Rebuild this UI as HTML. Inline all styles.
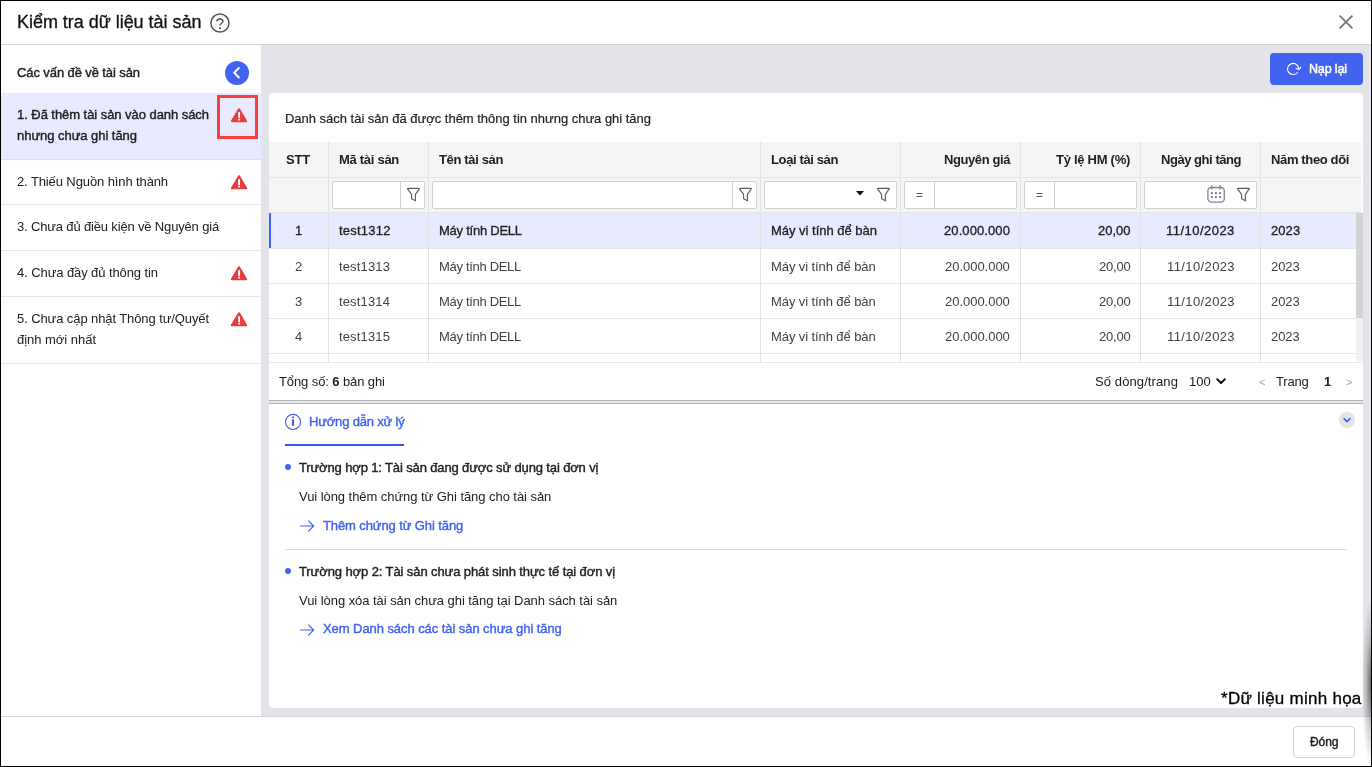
<!DOCTYPE html>
<html lang="vi">
<head>
<meta charset="utf-8">
<title>Kiểm tra dữ liệu tài sản</title>
<style>
*{box-sizing:border-box;margin:0;padding:0}
html,body{width:1372px;height:767px;overflow:hidden;background:#fff}
body{font-family:"Liberation Sans",sans-serif;font-size:13px;color:#212121;position:relative}
.a{position:absolute}
.t{position:absolute;white-space:pre;will-change:transform}
.t b{font-weight:bold}
#frame{position:absolute;left:0;top:0;width:1372px;height:767px;border:1px solid #000;z-index:50}
.vs{position:absolute;width:1px;background:#e3e3e3}
.hs{position:absolute;height:1px;background:#e5e5e5}
.inp{position:absolute;background:#fff;border:1px solid #d0d0d0;border-radius:2px;height:28px;top:181px}
svg{position:absolute;overflow:visible}
</style>
</head>
<body>
<!-- header -->
<div class="a" style="left:1px;top:1px;width:1370px;height:44px;background:#fff;border-bottom:1px solid #d4d4d4"></div>
<!-- main grey -->
<div class="a" style="left:261px;top:45px;width:1110px;height:672px;background:#e2e4e9"></div>
<!-- sidebar -->
<div class="a" style="left:1px;top:45px;width:260px;height:671px;background:#fff"></div>
<div class="a" style="left:1px;top:93px;width:260px;height:67px;background:#e8ebff;border-bottom:1px solid #e0e0e0"></div>
<div class="hs" style="left:1px;top:204px;width:260px"></div>
<div class="hs" style="left:1px;top:250px;width:260px"></div>
<div class="hs" style="left:1px;top:296px;width:260px"></div>
<div class="hs" style="left:1px;top:363px;width:260px"></div>
<!-- red highlight box -->
<div class="a" style="left:217px;top:95px;width:41px;height:44px;border:3px solid #fb3d3d"></div>
<!-- blue circle with chevron -->
<div class="a" style="left:225px;top:61px;width:24px;height:24px;border-radius:12px;background:#4262f0"></div>
<svg style="left:225px;top:61px" width="24" height="24" viewBox="0 0 24 24"><path d="M13.7 7.1 L9.2 11.7 L13.7 16.3" fill="none" stroke="#fff" stroke-width="2" stroke-linecap="square" stroke-linejoin="miter"/></svg>
<!-- help icon -->
<svg style="left:210px;top:13px" width="20" height="20" viewBox="0 0 20 20"><circle cx="9.95" cy="10.05" r="9.05" fill="none" stroke="#555" stroke-width="1.5"/><path d="M6.9 8.3 C6.9 6.7 8.2 5.9 9.9 5.9 C11.6 5.9 12.9 6.8 12.9 8.2 C12.9 10.2 10 10.4 10 12.6" fill="none" stroke="#555" stroke-width="1.5"/><rect x="9" y="14.3" width="2" height="1.8" fill="#555"/></svg>
<!-- close X -->
<svg style="left:1339px;top:15px" width="14" height="14" viewBox="0 0 14 14"><path d="M0.6 0.6 L13.4 13.4 M13.4 0.6 L0.6 13.4" stroke="#777" stroke-width="1.8" fill="none"/></svg>
<!-- warning icons -->
<svg style="left:230px;top:107px" width="18" height="17" viewBox="0 0 18 17"><path d="M9 2.3 L16.1 14.2 L1.9 14.2 Z" fill="#e53e3e" stroke="#e53e3e" stroke-width="2.2" stroke-linejoin="round"/><rect x="8.15" y="5.2" width="1.9" height="5.8" fill="#fff"/><rect x="8.15" y="11.7" width="1.9" height="1.7" fill="#fff"/></svg>
<svg style="left:230px;top:174px" width="18" height="17" viewBox="0 0 18 17"><path d="M9 2.3 L16.1 14.2 L1.9 14.2 Z" fill="#e53e3e" stroke="#e53e3e" stroke-width="2.2" stroke-linejoin="round"/><rect x="8.15" y="5.2" width="1.9" height="5.8" fill="#fff"/><rect x="8.15" y="11.7" width="1.9" height="1.7" fill="#fff"/></svg>
<svg style="left:230px;top:265px" width="18" height="17" viewBox="0 0 18 17"><path d="M9 2.3 L16.1 14.2 L1.9 14.2 Z" fill="#e53e3e" stroke="#e53e3e" stroke-width="2.2" stroke-linejoin="round"/><rect x="8.15" y="5.2" width="1.9" height="5.8" fill="#fff"/><rect x="8.15" y="11.7" width="1.9" height="1.7" fill="#fff"/></svg>
<svg style="left:230px;top:311px" width="18" height="17" viewBox="0 0 18 17"><path d="M9 2.3 L16.1 14.2 L1.9 14.2 Z" fill="#e53e3e" stroke="#e53e3e" stroke-width="2.2" stroke-linejoin="round"/><rect x="8.15" y="5.2" width="1.9" height="5.8" fill="#fff"/><rect x="8.15" y="11.7" width="1.9" height="1.7" fill="#fff"/></svg>

<!-- reload button -->
<div class="a" style="left:1270px;top:53px;width:93px;height:32px;border-radius:4px;background:#4262f0"></div>
<svg style="left:1285px;top:61px" width="18" height="16" viewBox="0 0 18 16"><path d="M12.5 11.5 A5.6 5.6 0 1 1 13.75 7.9" fill="none" stroke="#fff" stroke-width="1.1" stroke-linecap="round"/><path d="M11 7.5 L14 8.5 L15.9 6.1" fill="none" stroke="#fff" stroke-width="1.1" stroke-linecap="round" stroke-linejoin="round"/></svg>

<!-- top card -->
<div class="a" style="left:269px;top:93px;width:1094px;height:307px;background:#fff;border-radius:4px 4px 0 0"></div>
<!-- table header + filter bg -->
<div class="a" style="left:269px;top:142px;width:1092px;height:71px;background:#f5f5f5"></div>
<div class="hs" style="left:269px;top:177px;width:1092px"></div>
<div class="hs" style="left:269px;top:212px;width:1092px"></div>
<!-- selected row -->
<div class="a" style="left:269px;top:213px;width:1087px;height:35px;background:#e8ebff"></div>
<div class="a" style="left:269px;top:213px;width:2px;height:35px;background:#4262f0"></div>
<div class="hs" style="left:269px;top:248px;width:1087px"></div>
<div class="hs" style="left:269px;top:283px;width:1087px"></div>
<div class="hs" style="left:269px;top:318px;width:1087px"></div>
<div class="hs" style="left:269px;top:353px;width:1087px"></div>
<div class="hs" style="left:269px;top:362px;width:1094px;background:#e6e6e6"></div>
<!-- column separators -->
<div class="vs" style="left:328px;top:142px;height:220px"></div>
<div class="vs" style="left:428px;top:142px;height:220px"></div>
<div class="vs" style="left:760px;top:142px;height:220px"></div>
<div class="vs" style="left:900px;top:142px;height:220px"></div>
<div class="vs" style="left:1020px;top:142px;height:220px"></div>
<div class="vs" style="left:1140px;top:142px;height:220px"></div>
<div class="vs" style="left:1260px;top:142px;height:220px"></div>
<!-- scrollbar -->
<div class="a" style="left:1356px;top:213px;width:7px;height:148px;background:#f1f1f1"></div>
<div class="a" style="left:1356px;top:213px;width:7px;height:105px;background:#d3d3d3"></div>
<!-- filter inputs -->
<div class="inp" style="left:332px;width:93px"></div><div class="vs" style="left:400px;top:182px;height:26px;background:#d0d0d0"></div>
<div class="inp" style="left:432px;width:325px"></div><div class="vs" style="left:732px;top:182px;height:26px;background:#d0d0d0"></div>
<div class="inp" style="left:764px;width:133px"></div>
<div class="inp" style="left:904px;width:113px"></div><div class="vs" style="left:934px;top:182px;height:26px;background:#d0d0d0"></div>
<div class="inp" style="left:1024px;width:113px"></div><div class="vs" style="left:1054px;top:182px;height:26px;background:#d0d0d0"></div>
<div class="inp" style="left:1144px;width:113px"></div>
<!-- filter funnel icons -->
<svg style="left:405px;top:186px" width="16" height="16" viewBox="0 0 16 16"><path d="M3.1 2.3 H13.7 Q14.7 2.3 14.1 3.2 L10.4 8.4 V14.8 L6.6 12.8 V8.4 L2.7 3.2 Q2.1 2.3 3.1 2.3 Z" fill="none" stroke="#5c5c5c" stroke-width="1.15" stroke-linejoin="round"/></svg>
<svg style="left:737px;top:186px" width="16" height="16" viewBox="0 0 16 16"><path d="M3.1 2.3 H13.7 Q14.7 2.3 14.1 3.2 L10.4 8.4 V14.8 L6.6 12.8 V8.4 L2.7 3.2 Q2.1 2.3 3.1 2.3 Z" fill="none" stroke="#5c5c5c" stroke-width="1.15" stroke-linejoin="round"/></svg>
<svg style="left:875px;top:186px" width="16" height="16" viewBox="0 0 16 16"><path d="M3.1 2.3 H13.7 Q14.7 2.3 14.1 3.2 L10.4 8.4 V14.8 L6.6 12.8 V8.4 L2.7 3.2 Q2.1 2.3 3.1 2.3 Z" fill="none" stroke="#5c5c5c" stroke-width="1.15" stroke-linejoin="round"/></svg>
<svg style="left:1235px;top:186px" width="16" height="16" viewBox="0 0 16 16"><path d="M3.1 2.3 H13.7 Q14.7 2.3 14.1 3.2 L10.4 8.4 V14.8 L6.6 12.8 V8.4 L2.7 3.2 Q2.1 2.3 3.1 2.3 Z" fill="none" stroke="#5c5c5c" stroke-width="1.15" stroke-linejoin="round"/></svg>
<!-- dropdown caret -->
<svg style="left:856px;top:191px" width="8" height="5" viewBox="0 0 8 5"><path d="M0 0 H8 L4 4.6 Z" fill="#111"/></svg>
<!-- calendar icon -->
<svg style="left:1206px;top:184px" width="20" height="20" viewBox="0 0 20 20"><rect x="1.9" y="3.5" width="16.4" height="14.6" rx="3.6" fill="none" stroke="#7d849c" stroke-width="1.3"/><path d="M5.9 1.3 V5.4 M14 1.3 V5.4" stroke="#7d849c" stroke-width="1.4"/><g fill="#6d748e"><rect x="5" y="8.2" width="1.9" height="1.8"/><rect x="9" y="8.2" width="1.9" height="1.8"/><rect x="13.05" y="8.2" width="1.9" height="1.8"/><rect x="5" y="12.2" width="1.9" height="1.8"/><rect x="9" y="12.2" width="1.9" height="1.8"/><rect x="13.05" y="12.2" width="1.9" height="1.8"/></g></svg>
<!-- pager chevron -->
<svg style="left:1216px;top:378px" width="10" height="7" viewBox="0 0 10 7"><path d="M1.2 1.2 L5 5 L8.8 1.2" fill="none" stroke="#111" stroke-width="2" stroke-linecap="round" stroke-linejoin="round"/></svg>
<!-- splitter -->
<div class="a" style="left:269px;top:400px;width:1094px;height:4px;background:#e6e7eb;border-top:1px solid #b2b2b2;border-bottom:1px solid #b2b2b2"></div>
<!-- bottom card -->
<div class="a" style="left:269px;top:404px;width:1094px;height:304px;background:#fff;border-radius:0 0 4px 4px"></div>
<!-- tab underline -->
<div class="a" style="left:285px;top:444px;width:119px;height:2px;background:#3455e8"></div>
<!-- info icon -->
<svg style="left:284px;top:413px" width="18" height="18" viewBox="0 0 18 18"><circle cx="9" cy="8.9" r="7.55" fill="none" stroke="#4262f0" stroke-width="1.15"/><rect x="7.95" y="6.2" width="2.1" height="6.7" fill="#4262f0"/><rect x="7.95" y="3.5" width="2.1" height="1.6" fill="#4262f0"/></svg>
<!-- collapse btn -->
<div class="a" style="left:1339px;top:412px;width:16px;height:16px;border-radius:8px;background:#e4e4e7"></div>
<svg style="left:1339px;top:412px" width="16" height="16" viewBox="0 0 16 16"><path d="M5 6.6 L8 9.6 L11 6.6" fill="none" stroke="#3d5af1" stroke-width="1.5" stroke-linecap="round" stroke-linejoin="round"/></svg>
<!-- bullets -->
<div class="a" style="left:285px;top:464px;width:6px;height:6px;border-radius:3px;background:#4262f0"></div>
<div class="a" style="left:285px;top:568px;width:6px;height:6px;border-radius:3px;background:#4262f0"></div>
<!-- arrows -->
<svg style="left:300px;top:520px" width="15" height="12" viewBox="0 0 15 12"><path d="M0.6 6 H13.4 M8.5 0.9 L13.7 6 L8.5 11.1" fill="none" stroke="#4262f0" stroke-width="1.1" stroke-linecap="round" stroke-linejoin="round"/></svg>
<svg style="left:300px;top:624px" width="15" height="12" viewBox="0 0 15 12"><path d="M0.6 6 H13.4 M8.5 0.9 L13.7 6 L8.5 11.1" fill="none" stroke="#4262f0" stroke-width="1.1" stroke-linecap="round" stroke-linejoin="round"/></svg>
<!-- case separator -->
<div class="hs" style="left:285px;top:549px;width:1062px;background:#d8dbe1"></div>
<!-- footer -->
<div class="a" style="left:1px;top:716px;width:1370px;height:50px;background:#fff;border-top:1px solid #d3d6dd"></div>
<div class="a" style="left:1293px;top:726px;width:62px;height:32px;border:1px solid #d0d4dd;border-radius:4px;background:#fff"></div>
<div class="t" style="left:16.60px;top:10.76px;font-size:18px;line-height:22px;height:22px;letter-spacing:-0.031px;-webkit-text-stroke:0.3px;color:#111;">Kiểm tra dữ liệu tài sản</div>
<div class="t" style="left:17.00px;top:64.50px;font-size:13px;line-height:16px;height:16px;letter-spacing:-0.097px;-webkit-text-stroke:0.4px;">Các vấn đề về tài sản</div>
<div class="t" style="left:17.00px;top:106.50px;font-size:13px;line-height:16px;height:16px;letter-spacing:-0.053px;-webkit-text-stroke:0.4px;">1. Đã thêm tài sản vào danh sách</div>
<div class="t" style="left:17.00px;top:127.50px;font-size:13px;line-height:16px;height:16px;letter-spacing:-0.041px;-webkit-text-stroke:0.4px;">nhưng chưa ghi tăng</div>
<div class="t" style="left:17.00px;top:173.50px;font-size:13px;line-height:16px;height:16px;letter-spacing:-0.109px;">2. Thiếu Nguồn hình thành</div>
<div class="t" style="left:17.00px;top:218.50px;font-size:13px;line-height:16px;height:16px;letter-spacing:-0.160px;">3. Chưa đủ điều kiện về Nguyên giá</div>
<div class="t" style="left:17.00px;top:264.50px;font-size:13px;line-height:16px;height:16px;letter-spacing:-0.089px;">4. Chưa đầy đủ thông tin</div>
<div class="t" style="left:17.00px;top:310.50px;font-size:13px;line-height:16px;height:16px;letter-spacing:-0.095px;">5. Chưa cập nhật Thông tư/Quyết</div>
<div class="t" style="left:17.00px;top:331.50px;font-size:13px;line-height:16px;height:16px;letter-spacing:-0.028px;">định mới nhất</div>
<div class="t" style="left:285.00px;top:110.50px;font-size:13px;line-height:16px;height:16px;letter-spacing:-0.018px;-webkit-text-stroke:0.18px;">Danh sách tài sản đã được thêm thông tin nhưng chưa ghi tăng</div>
<div class="t" style="left:286.00px;top:151.50px;font-size:13px;line-height:16px;height:16px;letter-spacing:-0.188px;font-weight:bold;">STT</div>
<div class="t" style="left:339.00px;top:151.50px;font-size:13px;line-height:16px;height:16px;letter-spacing:-0.286px;font-weight:bold;">Mã tài sản</div>
<div class="t" style="left:439.00px;top:151.50px;font-size:13px;line-height:16px;height:16px;letter-spacing:-0.357px;font-weight:bold;">Tên tài sản</div>
<div class="t" style="left:771.00px;top:151.50px;font-size:13px;line-height:16px;height:16px;letter-spacing:-0.378px;font-weight:bold;">Loại tài sản</div>
<div class="t" style="left:944.00px;top:151.50px;font-size:13px;line-height:16px;height:16px;letter-spacing:-0.408px;font-weight:bold;">Nguyên giá</div>
<div class="t" style="left:1056.00px;top:151.50px;font-size:13px;line-height:16px;height:16px;letter-spacing:-0.275px;font-weight:bold;">Tỷ lệ HM (%)</div>
<div class="t" style="left:1160.50px;top:151.50px;font-size:13px;line-height:16px;height:16px;letter-spacing:-0.458px;font-weight:bold;">Ngày ghi tăng</div>
<div class="t" style="left:1271.00px;top:151.50px;font-size:13px;line-height:16px;height:16px;letter-spacing:-0.362px;font-weight:bold;">Năm theo dõi</div>
<div class="t" style="left:294.88px;top:222.50px;font-size:13px;line-height:16px;height:16px;-webkit-text-stroke:0.3px;">1</div>
<div class="t" style="left:339.00px;top:222.50px;font-size:13px;line-height:16px;height:16px;letter-spacing:0.216px;-webkit-text-stroke:0.3px;">test1312</div>
<div class="t" style="left:439.00px;top:222.50px;font-size:13px;line-height:16px;height:16px;letter-spacing:-0.246px;-webkit-text-stroke:0.3px;">Máy tính DELL</div>
<div class="t" style="left:771.00px;top:222.50px;font-size:13px;line-height:16px;height:16px;letter-spacing:-0.013px;-webkit-text-stroke:0.3px;">Máy vi tính để bàn</div>
<div class="t" style="left:944.00px;top:222.50px;font-size:13px;line-height:16px;height:16px;letter-spacing:0.092px;-webkit-text-stroke:0.3px;">20.000.000</div>
<div class="t" style="left:1097.60px;top:222.50px;font-size:13px;line-height:16px;height:16px;letter-spacing:-0.029px;-webkit-text-stroke:0.3px;">20,00</div>
<div class="t" style="left:1166.20px;top:222.50px;font-size:13px;line-height:16px;height:16px;letter-spacing:0.469px;-webkit-text-stroke:0.3px;">11/10/2023</div>
<div class="t" style="left:1271.00px;top:222.50px;font-size:13px;line-height:16px;height:16px;letter-spacing:0.070px;-webkit-text-stroke:0.3px;">2023</div>
<div class="t" style="left:294.88px;top:258.50px;font-size:13px;line-height:16px;height:16px;color:#424242;">2</div>
<div class="t" style="left:339.00px;top:258.50px;font-size:13px;line-height:16px;height:16px;letter-spacing:0.141px;color:#424242;">test1313</div>
<div class="t" style="left:439.00px;top:258.50px;font-size:13px;line-height:16px;height:16px;letter-spacing:-0.315px;color:#424242;">Máy tính DELL</div>
<div class="t" style="left:771.00px;top:258.50px;font-size:13px;line-height:16px;height:16px;letter-spacing:-0.091px;color:#424242;">Máy vi tính để bàn</div>
<div class="t" style="left:945.20px;top:258.50px;font-size:13px;line-height:16px;height:16px;letter-spacing:-0.028px;color:#424242;">20.000.000</div>
<div class="t" style="left:1098.60px;top:258.50px;font-size:13px;line-height:16px;height:16px;letter-spacing:-0.229px;color:#424242;">20,00</div>
<div class="t" style="left:1166.60px;top:258.50px;font-size:13px;line-height:16px;height:16px;letter-spacing:0.389px;color:#424242;">11/10/2023</div>
<div class="t" style="left:1271.00px;top:258.50px;font-size:13px;line-height:16px;height:16px;letter-spacing:-0.055px;color:#424242;">2023</div>
<div class="t" style="left:294.88px;top:293.50px;font-size:13px;line-height:16px;height:16px;color:#424242;">3</div>
<div class="t" style="left:339.00px;top:293.50px;font-size:13px;line-height:16px;height:16px;letter-spacing:0.141px;color:#424242;">test1314</div>
<div class="t" style="left:439.00px;top:293.50px;font-size:13px;line-height:16px;height:16px;letter-spacing:-0.315px;color:#424242;">Máy tính DELL</div>
<div class="t" style="left:771.00px;top:293.50px;font-size:13px;line-height:16px;height:16px;letter-spacing:-0.091px;color:#424242;">Máy vi tính để bàn</div>
<div class="t" style="left:945.20px;top:293.50px;font-size:13px;line-height:16px;height:16px;letter-spacing:-0.028px;color:#424242;">20.000.000</div>
<div class="t" style="left:1098.60px;top:293.50px;font-size:13px;line-height:16px;height:16px;letter-spacing:-0.229px;color:#424242;">20,00</div>
<div class="t" style="left:1166.60px;top:293.50px;font-size:13px;line-height:16px;height:16px;letter-spacing:0.389px;color:#424242;">11/10/2023</div>
<div class="t" style="left:1271.00px;top:293.50px;font-size:13px;line-height:16px;height:16px;letter-spacing:-0.055px;color:#424242;">2023</div>
<div class="t" style="left:294.88px;top:328.50px;font-size:13px;line-height:16px;height:16px;color:#424242;">4</div>
<div class="t" style="left:339.00px;top:328.50px;font-size:13px;line-height:16px;height:16px;letter-spacing:0.141px;color:#424242;">test1315</div>
<div class="t" style="left:439.00px;top:328.50px;font-size:13px;line-height:16px;height:16px;letter-spacing:-0.315px;color:#424242;">Máy tính DELL</div>
<div class="t" style="left:771.00px;top:328.50px;font-size:13px;line-height:16px;height:16px;letter-spacing:-0.091px;color:#424242;">Máy vi tính để bàn</div>
<div class="t" style="left:945.20px;top:328.50px;font-size:13px;line-height:16px;height:16px;letter-spacing:-0.028px;color:#424242;">20.000.000</div>
<div class="t" style="left:1098.60px;top:328.50px;font-size:13px;line-height:16px;height:16px;letter-spacing:-0.229px;color:#424242;">20,00</div>
<div class="t" style="left:1166.60px;top:328.50px;font-size:13px;line-height:16px;height:16px;letter-spacing:0.389px;color:#424242;">11/10/2023</div>
<div class="t" style="left:1271.00px;top:328.50px;font-size:13px;line-height:16px;height:16px;letter-spacing:-0.055px;color:#424242;">2023</div>
<div class="t" style="left:916.19px;top:188.34px;font-size:12px;line-height:15px;height:15px;color:#555;">=</div>
<div class="t" style="left:1036.19px;top:188.34px;font-size:12px;line-height:15px;height:15px;color:#555;">=</div>
<div class="t" style="left:279.00px;top:373.50px;font-size:13px;line-height:16px;height:16px;letter-spacing:-0.1px;">Tổng số: <b>6</b> bản ghi</div>
<div class="t" style="left:1095.00px;top:373.50px;font-size:13px;line-height:16px;height:16px;letter-spacing:0.101px;">Số dòng/trang</div>
<div class="t" style="left:1189.30px;top:373.50px;font-size:13px;line-height:16px;height:16px;letter-spacing:-0.034px;">100</div>
<div class="t" style="left:1259.38px;top:374.69px;font-size:11px;line-height:14px;height:14px;color:#a5a5a5;">&lt;</div>
<div class="t" style="left:1276.30px;top:373.50px;font-size:13px;line-height:16px;height:16px;letter-spacing:-0.197px;">Trang</div>
<div class="t" style="left:1323.88px;top:373.50px;font-size:13px;line-height:16px;height:16px;font-weight:bold;">1</div>
<div class="t" style="left:1346.48px;top:374.69px;font-size:11px;line-height:14px;height:14px;color:#a5a5a5;">&gt;</div>
<div class="t" style="left:308.60px;top:414.00px;font-size:13px;line-height:16px;height:16px;letter-spacing:-0.174px;-webkit-text-stroke:0.4px;color:#4262f0;">Hướng dẫn xử lý</div>
<div class="t" style="left:299.30px;top:460.00px;font-size:13px;line-height:16px;height:16px;letter-spacing:-0.132px;-webkit-text-stroke:0.4px;">Trường hợp 1: Tài sản đang được sử dụng tại đơn vị</div>
<div class="t" style="left:299.20px;top:488.50px;font-size:13px;line-height:16px;height:16px;letter-spacing:-0.056px;">Vui lòng thêm chứng từ Ghi tăng cho tài sản</div>
<div class="t" style="left:323.30px;top:517.50px;font-size:13px;line-height:16px;height:16px;letter-spacing:-0.101px;-webkit-text-stroke:0.4px;color:#4262f0;">Thêm chứng từ Ghi tăng</div>
<div class="t" style="left:299.30px;top:564.00px;font-size:13px;line-height:16px;height:16px;letter-spacing:-0.095px;-webkit-text-stroke:0.4px;">Trường hợp 2: Tài sản chưa phát sinh thực tế tại đơn vị</div>
<div class="t" style="left:299.20px;top:592.80px;font-size:13px;line-height:16px;height:16px;letter-spacing:-0.051px;">Vui lòng xóa tài sản chưa ghi tăng tại Danh sách tài sản</div>
<div class="t" style="left:323.30px;top:621.00px;font-size:13px;line-height:16px;height:16px;letter-spacing:-0.067px;-webkit-text-stroke:0.4px;color:#4262f0;">Xem Danh sách các tài sản chưa ghi tăng</div>
<div class="t" style="left:1221.00px;top:688.21px;font-size:17px;line-height:21px;height:21px;letter-spacing:0.263px;-webkit-text-stroke:0.3px;color:#000;">*Dữ liệu minh họa</div>
<div class="t" style="left:1309.20px;top:61.27px;font-size:12.5px;line-height:16px;height:16px;letter-spacing:-0.160px;-webkit-text-stroke:0.55px;color:#fff;">Nạp lại</div>
<div class="t" style="left:1309.60px;top:734.74px;font-size:12px;line-height:15px;height:15px;letter-spacing:-0.072px;-webkit-text-stroke:0.4px;">Đóng</div>
<div class="a" style="left:1361px;top:580px;width:10px;height:186px;background:radial-gradient(ellipse 9px 84px at 100% 56%, rgba(0,0,0,0.55), rgba(0,0,0,0.18) 55%, rgba(0,0,0,0) 100%)"></div>
<div id="frame"></div>
</body>
</html>
